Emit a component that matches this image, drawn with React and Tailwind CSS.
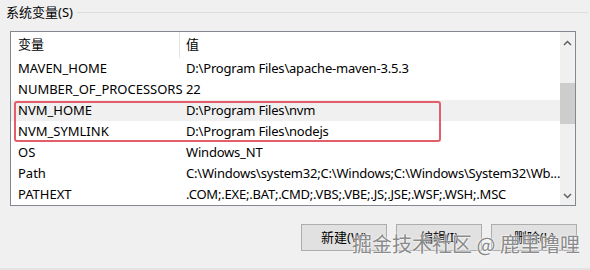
import React from 'react';

const font = { fontFamily: '"Noto Sans", "Noto Sans CJK SC", sans-serif' };

const rows = [
  ['MAVEN_HOME', 'D:\\Program Files\\apache-maven-3.5.3'],
  ['NUMBER_OF_PROCESSORS', '22'],
  ['NVM_HOME', 'D:\\Program Files\\nvm', true],
  ['NVM_SYMLINK', 'D:\\Program Files\\nodejs'],
  ['OS', 'Windows_NT'],
  ['Path', 'C:\\Windows\\system32;C:\\Windows;C:\\Windows\\System32\\Wb...'],
  ['PATHEXT', '.COM;.EXE;.BAT;.CMD;.VBS;.VBE;.JS;.JSE;.WSF;.WSH;.MSC'],
];

const Btn = ({ label }) => (
  <button className="w-[86px] h-[27px] bg-[#e1e1e1] border border-[#adadad] text-[13px] text-black leading-none">
    {label}
  </button>
);

export default function App() {
  return (
    <div className="relative w-[590px] h-[270px] bg-[#f0f0f0] overflow-hidden text-black" style={font}>
      {/* group header */}
      <div className="flex items-center pl-[6px] pt-[4px] h-[20px]">
        <span className="text-[13px] leading-none">系统变量(S)</span>
        <div className="flex-1 h-px bg-[#dcdcdc] ml-[4px] mr-[2px]" />
      </div>

      {/* list view */}
      <div className="ml-[10px] mt-[11px] w-[566px] h-[175px] border border-[#828790] bg-white flex">
        <div className="flex-1 flex flex-col">
          <div className="flex h-[26px] items-center text-[13px]">
            <div className="w-[169px] h-full flex items-center pl-[7px] border-r border-[#e5e5e5]">变量</div>
            <div className="pl-[6px]">值</div>
          </div>
          {rows.map(([k, v, sel]) => (
            <div key={k} className={`flex h-[21px] items-center text-[13px] whitespace-nowrap ${sel ? 'bg-[#f0f0f0]' : ''}`}>
              <div className="w-[169px] pl-[7px]">{k}</div>
              <div className="pl-[6px] tracking-[-0.2px]">{v}</div>
            </div>
          ))}
        </div>
        {/* scrollbar */}
        <div className="w-[17px] bg-[#f0f0f0] flex flex-col items-center">
          <div className="h-[17px] flex items-center justify-center mt-[2px]">
            <svg width="9" height="6" viewBox="0 0 9 6"><path d="M1 5 L4.5 1.5 L8 5" fill="none" stroke="#606060" strokeWidth="1.5" /></svg>
          </div>
          <div className="mt-[32px] w-[15px] h-[41px] bg-[#cdcdcd]" />
          <div className="flex-1" />
          <div className="h-[17px] flex items-center justify-center mb-[1px]">
            <svg width="9" height="6" viewBox="0 0 9 6"><path d="M1 1 L4.5 4.5 L8 1" fill="none" stroke="#606060" strokeWidth="1.5" /></svg>
          </div>
        </div>
      </div>

      {/* buttons */}
      <div className="flex justify-end gap-[9px] pr-[13px] mt-[18px]">
        <Btn label="新建(W)" />
        <Btn label="编辑(I)" />
        <Btn label="删除(L)" />
      </div>

      {/* red highlight */}
      <div className="absolute left-[14px] top-[101px] w-[427px] h-[41px] border-2 border-[#e35d6a] rounded-[3px]" />

      {/* watermark */}
      <div
        className="absolute left-[352px] top-[230px] text-[20px] leading-[27px] text-[#8a8a8a] whitespace-nowrap"
        style={{ fontFamily: '"Noto Sans CJK SC", sans-serif', textShadow: '0 0 2px #fff, 0 0 2px #fff' }}
      >
        掘金技术社区 @ 鹿里噜哩
      </div>

      <div className="absolute left-0 right-0 bottom-0 h-[2px] bg-[#e3e3e3]" />
    </div>
  );
}
